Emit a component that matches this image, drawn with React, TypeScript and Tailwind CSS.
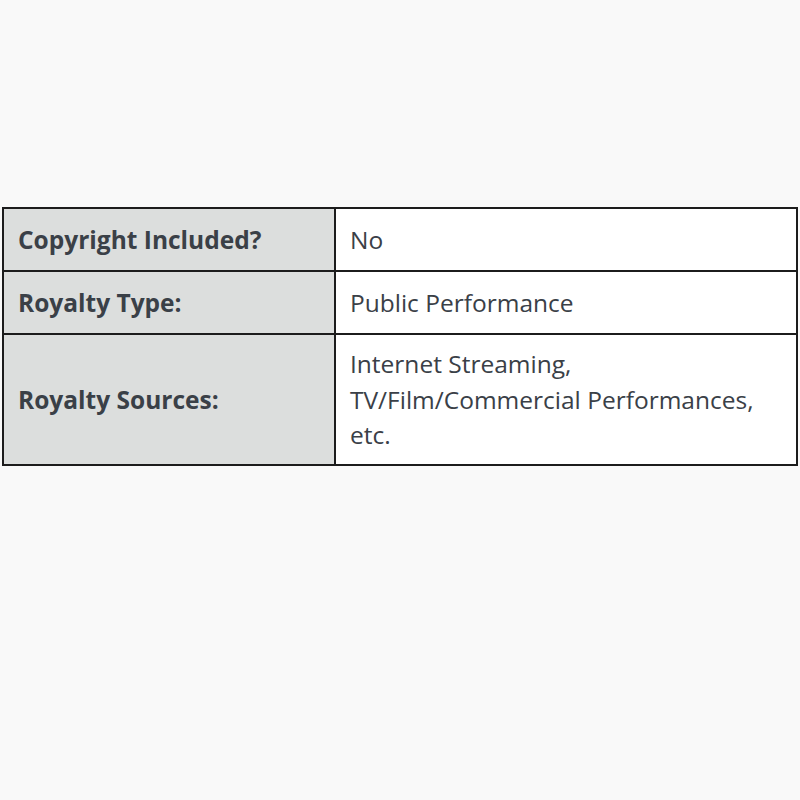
import React from 'react'

const rows = [
  { label: 'Copyright Included?', value: ['No'], h: 'h-[63px]' },
  { label: 'Royalty Type:', value: ['Public Performance'], h: 'h-[63px]' },
  { label: 'Royalty Sources:', value: ['Internet Streaming,', 'TV/Film/Commercial Performances,', 'etc.'], h: '' },
]

function App() {
  return (
    <div className="flex min-h-screen flex-col bg-[#f9f9f9] px-[2px] pt-[207px]">
      <table
        className="w-full border-collapse text-[24.5px] leading-[35.5px] text-[#3a4047]"
        style={{ fontFamily: '"Open Sans", sans-serif' }}
      >
        <tbody>
          {rows.map((r) => (
            <tr key={r.label} className={r.h}>
              <th className="w-[332px] border-2 border-[#1c1c1c] bg-[#dcdedd] px-[14px] py-[11px] text-left font-bold">
                {r.label}
              </th>
              <td className="border-2 border-[#1c1c1c] bg-white px-[14px] py-[11px]">
                {r.value.map((v) => (
                  <div key={v}>{v}</div>
                ))}
              </td>
            </tr>
          ))}
        </tbody>
      </table>
    </div>
  )
}

export default App
